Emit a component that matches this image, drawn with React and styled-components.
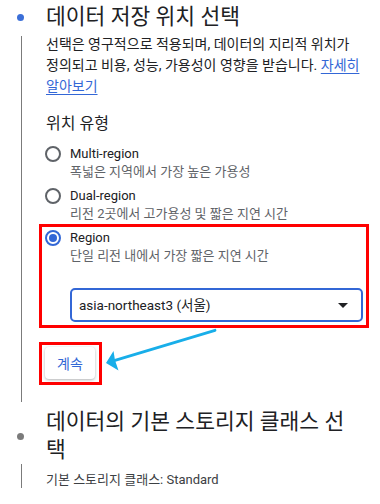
import React from 'react';
import styled, { createGlobalStyle } from 'styled-components';

const Global = createGlobalStyle`
  html, body { margin: 0; padding: 0; background: #fff; }
  body {
    font-family: Roboto, "Noto Sans CJK KR", sans-serif;
    color: #202124;
  }
`;

const Page = styled.div`
  position: relative;
  width: 380px;
  height: 504px;
  overflow: hidden;
  padding-top: 3px;
  box-sizing: border-box;
`;

const Step = styled.section`
  display: grid;
  grid-template-columns: 46px 1fr;
  margin-top: ${(p) => p.$gap || 0}px;
`;

const Bullet = styled.span`
  width: 7px;
  height: 7px;
  border-radius: 50%;
  background: ${(p) => (p.$active ? '#3b6fd8' : '#7b7b7b')};
  margin-left: 17px;
  align-self: center;
`;

const Title = styled.h2`
  margin: 0;
  padding-right: 17px;
  font-size: 21.5px;
  font-weight: 400;
  line-height: 28px;
  color: #202124;
`;

const Rail = styled.span`
  width: 1px;
  margin-left: 21px;
  margin-top: ${(p) => p.$offset || 0}px;
  background: #7b7b7b;
`;

const Body = styled.div`
  padding: ${(p) => p.$top}px 17px ${(p) => p.$bottom}px 0;
  font-size: ${(p) => p.$size || 14}px;
  line-height: ${(p) => p.$lh || 21}px;
  color: ${(p) => p.$color || '#202124'};
`;

const Description = styled.p`
  margin: 0;
`;

const Link = styled.a`
  color: #3367d6;
  text-decoration: underline;
  text-underline-offset: 3px;
`;

const SectionLabel = styled.h3`
  margin: 16px 0 0;
  font-size: 16px;
  font-weight: 400;
  line-height: 22px;
`;

const Options = styled.div`
  display: flex;
  flex-direction: column;
  gap: 7px;
  margin: 10px 0 0 -1px;
`;

const Option = styled.div`
  display: grid;
  grid-template-columns: 16px 1fr;
  column-gap: 9px;
`;

const Radio = styled.span`
  width: 16px;
  height: 16px;
  box-sizing: border-box;
  margin-top: 1px;
  border-radius: 50%;
  border: 2px solid ${(p) => (p.$checked ? '#3367d6' : '#5f6368')};
  display: flex;
  align-items: center;
  justify-content: center;
  &::after {
    content: '';
    width: 8px;
    height: 8px;
    border-radius: 50%;
    background: #3367d6;
    display: ${(p) => (p.$checked ? 'block' : 'none')};
  }
`;

const OptionLabel = styled.span`
  font-size: 13px;
  line-height: 18px;
  color: #202124;
`;

const OptionHint = styled.span`
  grid-column: 2;
  font-size: 13px;
  line-height: 17px;
  color: #5f6368;
`;

const Highlight = styled.div`
  border: 3px solid #ff0000;
  margin: ${(p) => p.$margin};
  padding: ${(p) => p.$pad};
  width: ${(p) => (p.$fit ? 'fit-content' : 'auto')};
`;

const Select = styled.div`
  display: flex;
  align-items: center;
  justify-content: space-between;
  height: 34px;
  box-sizing: border-box;
  margin: 24px 0 0 25px;
  padding: 0 13px 0 7px;
  border: 2px solid #3367d6;
  border-radius: 5px;
  font-size: 13.5px;
  color: #202124;
`;

const Caret = styled.span`
  width: 0;
  height: 0;
  border-left: 5px solid transparent;
  border-right: 5px solid transparent;
  border-top: 5px solid #202124;
`;

const Button = styled.button`
  display: block;
  width: 50px;
  height: 32px;
  border: none;
  border-radius: 4px;
  background: #fff;
  box-shadow: 0 1px 3px rgba(60, 64, 67, 0.4);
  color: #3367d6;
  font-family: inherit;
  font-size: 14px;
  padding: 0;
`;

const Overlay = styled.svg`
  position: absolute;
  left: 0;
  top: 0;
  pointer-events: none;
`;

export default function App() {
  return (
    <Page>
      <Global />
      <Step>
        <Bullet $active />
        <Title>데이터 저장 위치 선택</Title>
        <Rail $offset={5} />
        <Body $top={3} $bottom={17}>
          <Description>
            선택은 영구적으로 적용되며, 데이터의 지리적 위치가 정의되고 비용, 성능, 가용성이 영향을 받습니다.{' '}
            <Link href="#">자세히 알아보기</Link>
          </Description>
          <SectionLabel>위치 유형</SectionLabel>
          <Options>
            <Option>
              <Radio />
              <OptionLabel>Multi-region</OptionLabel>
              <OptionHint>폭넓은 지역에서 가장 높은 가용성</OptionHint>
            </Option>
            <Option>
              <Radio />
              <OptionLabel>Dual-region</OptionLabel>
              <OptionHint>리전 2곳에서 고가용성 및 짧은 지연 시간</OptionHint>
            </Option>
            <Highlight $margin="-5px -6px 0 -6px" $pad="2px 3px 3px 3px">
              <Option>
                <Radio $checked />
                <OptionLabel>Region</OptionLabel>
                <OptionHint>단일 리전 내에서 가장 짧은 지연 시간</OptionHint>
              </Option>
              <Select>
                <span>asia-northeast3 (서울)</span>
                <Caret />
              </Select>
            </Highlight>
          </Options>
          <Highlight $fit $margin="14px 0 0 -7px" $pad="2px 4px 3px 3px">
            <Button>계속</Button>
          </Highlight>
        </Body>
      </Step>
      <Step $gap={6}>
        <Bullet />
        <Title>데이터의 기본 스토리지 클래스 선택</Title>
        <Rail />
        <Body $top={7} $bottom={0} $size={13} $lh={17} $color="#3c4043">
          기본 스토리지 클래스: Standard
        </Body>
      </Step>
      <Overlay width="380" height="504" viewBox="0 0 380 504">
        <line x1="215" y1="330.3" x2="115" y2="360.3" stroke="#18aee9" strokeWidth="2.8" strokeLinecap="round" />
        <polygon points="106,363 113.5,351 115,360.3 118.5,370.5" fill="#18aee9" />
      </Overlay>
    </Page>
  );
}
